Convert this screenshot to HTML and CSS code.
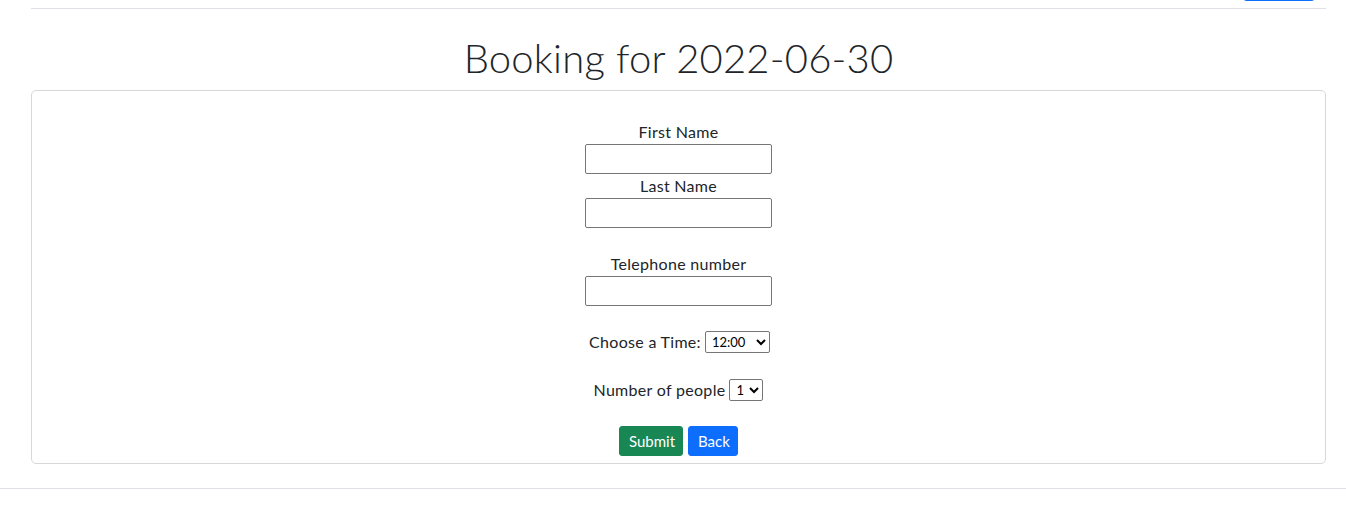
FILE: index.html
```html
<!DOCTYPE html>
<html>
<head>
<meta charset="utf-8">
<link rel="stylesheet" href="styles.css">
</head>
<body>
<header class="topbar">
  <div class="topbar-inner">
    <span class="nav-btn"></span>
  </div>
</header>
<main class="container">
  <h1 class="title">Booking for 2022-06-30</h1>
  <div class="card">
    <form class="booking-form">
      <div class="field">
        <label for="fn">First Name</label>
        <input id="fn" type="text" class="text-input">
      </div>
      <div class="field">
        <label for="ln">Last Name</label>
        <input id="ln" type="text" class="text-input">
      </div>
      <div class="field spaced">
        <label for="tel">Telephone number</label>
        <input id="tel" type="text" class="text-input">
      </div>
      <div class="inline-field time-row">
        <label for="time">Choose a Time:</label>
        <select id="time" class="select time-select"><option>12:00</option></select>
      </div>
      <div class="inline-field people-row">
        <label for="people">Number of people</label>
        <select id="people" class="select people-select"><option>1</option></select>
      </div>
      <div class="actions">
        <button type="button" class="btn btn-success">Submit</button>
        <button type="button" class="btn btn-primary">Back</button>
      </div>
    </form>
  </div>
</main>
<footer class="footer"></footer>
</body>
</html>
```

FILE: styles.css
```css
* { box-sizing: border-box; }
html, body { margin: 0; padding: 0; }
body {
  font-family: "Lato", "Open Sans", sans-serif;
  color: #212529;
  background: #fff;
  font-size: 16px;
  line-height: 24px;
}
.topbar {
  padding: 0 20px 0 31px;
}
.topbar-inner {
  width: 1295px;
  height: 9px;
  border-bottom: 1px solid #dee2e6;
  position: relative;
}
.nav-btn {
  position: absolute;
  left: 1212px;
  top: -10px;
  width: 72px;
  height: 11px;
  border-radius: 0 0 4px 4px;
  background: #0d6efd;
}
.container {
  width: 1295px;
  margin-left: 31px;
}
.title {
  margin: 25px 0 8px;
  font-size: 40px;
  line-height: 48px;
  font-weight: 300;
  text-align: center;
  letter-spacing: 0.2px;
}
.card {
  border: 1px solid #d6d8db;
  border-radius: 5px;
  height: 374px;
  padding-top: 29px;
}
.booking-form {
  display: flex;
  flex-direction: column;
  align-items: center;
}
.field {
  display: flex;
  flex-direction: column;
  align-items: center;
}
.field label {
  line-height: 24px;
  letter-spacing: 0.3px;
}
.field.spaced { margin-top: 24px; }
.text-input {
  width: 187px;
  height: 30px;
  border: 1px solid #767676;
  border-radius: 2px;
  margin: 0;
  padding: 1px 2px;
}
.inline-field {
  display: flex;
  align-items: center;
  gap: 4px;
  height: 24px;
  letter-spacing: 0.3px;
}
.time-row { margin-top: 24px; padding-left: 2px; }
.people-row { margin-top: 24px; }
.select {
  font-family: "Lato", "Open Sans", sans-serif;
  font-size: 13px;
  height: 22px;
  border: 1px solid #767676;
  border-radius: 2px;
  background: #fff;
  color: #000;
  padding: 0 0 0 2px;
}
.time-select { width: 65px; }
.people-select { width: 34px; }
.actions {
  margin-top: 24px;
  display: flex;
  gap: 5px;
}
.btn {
  font-family: "Lato", "Open Sans", sans-serif;
  font-size: 15px;
  line-height: 20px;
  height: 30px;
  padding: 4px 9px;
  border: 1px solid transparent;
  border-radius: 3px;
  color: #fff;
}
.btn-success { background: #198754; border-color: #198754; width: 64px; }
.btn-primary { background: #0d6efd; border-color: #0d6efd; width: 50px; }
.footer {
  margin-top: 24px;
  border-top: 1px solid #dee2e6;
  height: 40px;
}
```
